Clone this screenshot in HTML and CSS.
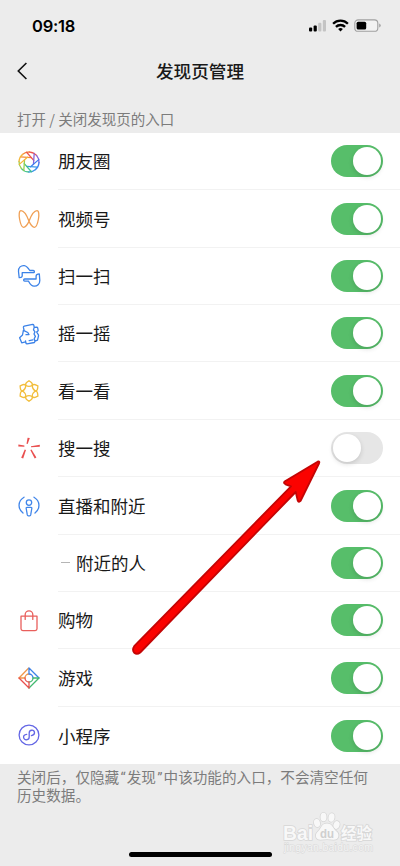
FILE: index.html
```html
<!DOCTYPE html>
<html lang="zh-CN">
<head>
<meta charset="utf-8">
<title>发现页管理</title>
<link rel="stylesheet" href="styles.css">
</head>
<body>
<div class="screen">
  <header class="status">
    <span class="time">09:18</span>
    <svg class="signals" width="74" height="16" viewBox="0 0 74 16">
      <rect x="1" y="9.5" width="3.2" height="4" rx="1"/>
      <rect x="5.6" y="7.4" width="3.2" height="6.1" rx="1"/>
      <rect x="10.2" y="4.8" width="3.2" height="8.7" rx="1" fill="#c4c4c4"/>
      <rect x="14.8" y="2" width="3.2" height="11.5" rx="1" fill="#c4c4c4"/>
      <g fill="none" stroke="#000" stroke-width="2.3">
        <path d="M25.1 5.8a10.4 10.4 0 0 1 14.8 0"/>
        <path d="M27.9 8.9a6.5 6.5 0 0 1 9.2 0"/>
      </g>
      <path d="M32.5 13.6l-2.4-2.5a3.5 3.5 0 0 1 4.8 0z"/>
      <rect x="46.8" y="1.9" width="23" height="11.4" rx="3.4" fill="#f2f2f2" stroke="#a0a0a0" stroke-width="1.1"/>
      <rect x="48.6" y="3.7" width="9.6" height="7.8" rx="1.6"/>
      <path d="M71.2 5.6q1.5.5 1.5 2t-1.5 2z" fill="#a0a0a0"/>
    </svg>
  </header>
  <nav class="nav">
    <svg class="back" width="12" height="20" viewBox="0 0 12 20"><path d="M10.400 2L2.300 10l8.100 8" fill="none" stroke="#111" stroke-width="1.6"/></svg>
    <h1>发现页管理</h1>
  </nav>
  <p class="caption">打开 / 关闭发现页的入口</p>

  <main class="list">
    <section class="row">
      <svg class="icon" viewBox="-12 -12 24 24">
        <defs><path id="blade" d="M-7.07-7.07A10 10 0 0 1 0-10M1.9-4.6H-8.9"/></defs>
        <g transform="rotate(4)">
        <use href="#blade" stroke="#f58b3c"/>
        <use href="#blade" stroke="#ee5350" transform="rotate(45)"/>
        <use href="#blade" stroke="#8a62d8" transform="rotate(90)"/>
        <use href="#blade" stroke="#3f7df0" transform="rotate(135)"/>
        <use href="#blade" stroke="#3a95e8" transform="rotate(180)"/>
        <use href="#blade" stroke="#45c48a" transform="rotate(225)"/>
        <use href="#blade" stroke="#98cf4c" transform="rotate(270)"/>
        <use href="#blade" stroke="#f5b63a" transform="rotate(315)"/>
        </g>
      </svg>
      <div class="cell"><span>朋友圈</span><i class="switch on"></i></div>
    </section>
    <section class="row">
      <svg class="icon" viewBox="-12 -12 24 24" stroke="#f0a055"><path d="M0 2.2C-1.8-2.6-5.2-8.3-8-8.3-12-8.3-8.7 8.3-5.4 8.3-3.8 8.3-1.2 5 0 2.2 1.8-2.6 5.2-8.3 8-8.3 12-8.3 8.7 8.3 5.4 8.3 3.8 8.3 1.2 5 0 2.2z"/></svg>
      <div class="cell"><span>视频号</span><i class="switch on"></i></div>
    </section>
    <section class="row">
      <svg class="icon" viewBox="-12 -12 24 24" stroke="#3b82e8"><path d="M-9.8 1.7L-10.5-4.5C-10.8-8.6-8-10.7-4.8-10.4-2.4-10.2-.9-8.2.8-5.5H4.2Q5.4-5.4 5.4-4.3T4.2-3.3H-6.8V.2Q-7 1.9-9.8 1.7z"/><path d="M10.3-2.2L10.8 4.4C10.8 8.3 8.2 10.4 5 10.2 2 10.2 1 8 -.5 5.1H-4.3Q-5.4 5-5.4 4T-4.3 3H7.1V0Q7.3-2.1 10.3-2.2z"/></svg>
      <div class="cell"><span>扫一扫</span><i class="switch on"></i></div>
    </section>
    <section class="row">
      <svg class="icon" viewBox="-12 -12 24 24" stroke="#3b82e8"><path d="M-5-4.200L-5.600-6.600Q-5.700-7.500-4.800-7.800L3.600-9.700Q4.500-9.800 4.800-8.900L5.200-6.600 7.600-6.900Q8.500-6.900 8.700-6L9.200-3.300 7.600-2 9.300.6Q9.700 1.200 9.500 2L8.500 6.200 6 7.200 5.400 8.500-2 9.900Q-2.900 9.900-3.100 9L-3.500 6.800M-5.600-3.700L-1.200-1.500 0 .5-3 .7M-5.600-3.700L-6.500 1-9.400 3.700-7.300 8.800-3.500 7.900M5.200-6.600L4.500-4.200 6-2.200 5 0 6.400 2.400 5.200 4.800 6 7.200M.2 6.700l3.700-.9"/></svg>
      <div class="cell"><span>摇一摇</span><i class="switch on"></i></div>
    </section>
    <section class="row">
      <svg class="icon" viewBox="-12 -12 24 24" stroke="#f2be3c">
        <defs><path id="petal" d="M-3.200-5.500Q0-3.800 3.200-5.500M-3.200-5.500C-4.200-8.300-2-8.600 0-10.300 2-8.600 4.200-8.300 3.200-5.500"/></defs>
        <use href="#petal"/><use href="#petal" transform="rotate(60)"/><use href="#petal" transform="rotate(120)"/><use href="#petal" transform="rotate(180)"/><use href="#petal" transform="rotate(240)"/><use href="#petal" transform="rotate(300)"/>
      </svg>
      <div class="cell"><span>看一看</span><i class="switch on"></i></div>
    </section>
    <section class="row">
      <svg class="icon" viewBox="-12 -12 24 24"><g fill="#e94f4f" stroke="none"><path d="M-1.4-10.3l2.2.4-2.1 5.8-1.2-.2z"/><path d="M-10.6-3.4l6 1v1.2l-6.1-.2z"/><path d="M10.8-3.2v2l-8.8.5v-1.1z"/><path d="M-4.3 1.6l1.3.5-2.8 8.4-2-.7z"/><path d="M1.3 2l1.2-.6 4.9 8.2-1.7 1z"/></g></svg>
      <div class="cell"><span>搜一搜</span><i class="switch"></i></div>
    </section>
    <section class="row">
      <svg class="icon" viewBox="-12 -12 24 24" stroke="#4186ea"><path d="M-5-8.8C-11.4-5-11.4 2.8-6 7M5-8.8C11.4-5 11.4 2.8 6 7"/><circle cy="-3.4" r="2.7"/><path d="M-2 1.4H2Q3 1.4 2.8 2.5L1.7 8.9Q1.5 9.8.7 9.8H-.7Q-1.5 9.8-1.7 8.9L-2.8 2.5Q-3 1.4-2 1.4z"/></svg>
      <div class="cell"><span>直播和附近</span><i class="switch on"></i></div>
    </section>
    <section class="row">
      <span class="icon"></span>
      <div class="cell child"><span>附近的人</span><i class="switch on"></i></div>
    </section>
    <section class="row">
      <svg class="icon" viewBox="-12 -12 24 24" stroke="#e95f5c"><path d="M-8-4.8H8V7.8Q8 9.6 6.2 9.6H-6.2Q-8 9.6-8 7.8z"/><path d="M-3.8-1.6V-6.4A3.8 3.8 0 0 1 3.8-6.4V-1.6"/></svg>
      <div class="cell"><span>购物</span><i class="switch on"></i></div>
    </section>
    <section class="row">
      <svg class="icon" viewBox="-12 -12 24 24">
        <path stroke="#f0974a" d="M-.5-9.8L-10 0H-4A4 4 0 0 1 0-4"/>
        <path stroke="#3b82e8" d="M0-10L10 0M0-10V-4A4 4 0 0 1 4 0"/>
        <path stroke="#43b970" d="M10 0L0 10M10 0H4A4 4 0 0 1 0 4"/>
        <path stroke="#e9504d" d="M-10 0L0 10V4A4 4 0 0 1-4 0"/>
      </svg>
      <div class="cell"><span>游戏</span><i class="switch on"></i></div>
    </section>
    <section class="row">
      <svg class="icon" viewBox="-12 -12 24 24" stroke="#6467e5"><circle r="9.9"/><path d="M-2.3-.6C-4.5-.3-5.6 1-5.4 2.5-4.8 5.8.2 5.4.2 2V-2C.2-5.4 5-5.8 5.5-2.5 5.6-1 4.5.3 2.4.6"/></svg>
      <div class="cell"><span>小程序</span><i class="switch on"></i></div>
    </section>
  </main>

  <p class="note">关闭后，仅隐藏<q>“</q>发现<q>”</q>中该功能的入口，不会清空任何<br>历史数据。</p>

  <div class="home"></div>

  <svg class="arrow" width="200" height="206" viewBox="0 0 200 206">
    <path d="M188 6.500Q190 6.200 189 8.500L170.500 46Q168.800 47.800 167.700 45.500L165.700 37 10.200 197.500Q7 200 4.200 197.800 1.800 194.500 4.200 191.200L161 31.300 155.500 29.300Q152.800 28 155 26.300Z" fill="#fb0200" stroke="#c30505" stroke-width="1.8" stroke-linejoin="round"/>
  </svg>

  <svg class="mark" width="94" height="46" viewBox="0 0 94 46">
    <g fill="#f8f8f8" stroke="#d6d6d6" stroke-width="1.6" paint-order="stroke">
      <text x="2" y="29.500" font-size="20" font-weight="700" textLength="30" lengthAdjust="spacingAndGlyphs">Bai</text>
      <ellipse cx="36" cy="13" rx="3" ry="4" transform="rotate(-12 36 13)"/>
      <ellipse cx="42.500" cy="7" rx="3" ry="4.300"/>
      <ellipse cx="50.500" cy="7.500" rx="3" ry="4.200" transform="rotate(10 50.500 7.500)"/>
      <ellipse cx="55.500" cy="15" rx="3" ry="4" transform="rotate(18 55.500 15)"/>
      <path d="M46 13.500C40 13.500 40.500 18.500 37 21.500 33 25 35 30 39.500 29.800 44 29 48 29 52.500 29.800 57.500 30 59.500 24.500 55 21 51.500 18 51.500 13.500 46 13.500z"/>
      <text x="60" y="28.500" class="mark-cn" font-size="15.500" font-weight="700" textLength="31">经验</text>
    </g>
    <text x="39" y="27.500" font-size="13" font-weight="700" fill="#cfcfcf" textLength="14" lengthAdjust="spacingAndGlyphs">du</text>
    <text x="3" y="41" font-size="10.500" fill="#f4f4f4" stroke="#d8d8d8" stroke-width="1" paint-order="stroke" textLength="89">jingyan.baidu.com</text>
  </svg>
</div>
</body>
</html>
```
FILE: styles.css
```css
* { box-sizing: border-box; }

body {
  margin: 0;
  background: #ececec;
  color: #191919;
  font-family: "Noto Sans CJK SC", sans-serif;
}

h1, p { margin: 0; }

.screen {
  position: relative;
  display: flex;
  flex-direction: column;
  height: 866px;
  overflow: hidden;
}

.status {
  display: flex;
  align-items: center;
  justify-content: space-between;
  height: 51px;
  padding: 0 18px 0 32px;
}

.time {
  font: 600 16.5px/20px Inter, sans-serif;
  letter-spacing: -0.25px;
  color: #000;
}

.nav {
  display: grid;
  grid-template-columns: 40px 1fr 40px;
  align-items: center;
  height: 40px;
}

.back { margin-left: 16px; }

h1 {
  font-size: 17.6px;
  font-weight: 500;
  line-height: 24px;
  text-align: center;
}

.caption {
  height: 42px;
  padding: 18px 17px 0;
  font-size: 14.5px;
  line-height: 20px;
  color: #7c7c7c;
}

.list {
  display: grid;
  grid-template-rows: repeat(11, 1fr);
  height: 631px;
  background: #fff;
}

.row {
  display: grid;
  grid-template-columns: 24px 1fr;
  column-gap: 17px;
  align-items: center;
  padding-left: 17px;
}

.icon {
  width: 24px;
  height: 24px;
  fill: none;
  stroke-width: 1.3;
  stroke-linejoin: round;
  stroke-linecap: round;
}

.cell {
  display: flex;
  align-items: center;
  justify-content: space-between;
  height: 100%;
  padding: 0.4px 17px 0 0;
  border-bottom: 1px solid #f2f2f2;
  font-size: 17.5px;
  line-height: 24px;
}

.row:last-child .cell { border-bottom: 0; }

.child::before {
  content: "";
  width: 9px;
  height: 1px;
  margin: 0 6px 0 3px;
  background: #b5b5b5;
}

.child span { flex: 1; }

.switch {
  display: flex;
  width: 52px;
  height: 32px;
  padding: 2px;
  border-radius: 16px;
  background: #e6e6e6;
}

.switch::after {
  content: "";
  width: 28px;
  height: 28px;
  border-radius: 50%;
  background: #fff;
  box-shadow: 0 2px 5px rgba(0, 0, 0, 0.14);
}

.switch.on {
  justify-content: flex-end;
  background: #57be6a;
}

.note {
  padding: 4px 17px 0;
  font-size: 14.6px;
  line-height: 17.4px;
  color: #7c7c7c;
  white-space: nowrap;
}

.note q {
  quotes: none;
  display: inline-block;
  width: 7.6px;
  text-align: center;
  font-family: Roboto, sans-serif;
  line-height: 1;
}

.note q::before, .note q::after { content: none; }

.home {
  width: 143px;
  height: 5px;
  margin: auto auto 9px 129px;
  border-radius: 3px;
  background: #000;
}

.arrow {
  position: absolute;
  left: 130px;
  top: 455px;
}

.mark {
  position: absolute;
  left: 281px;
  top: 810px;
  font-family: "Liberation Sans", sans-serif;
}

.mark-cn { font-family: "Noto Sans CJK SC", sans-serif; }
```
